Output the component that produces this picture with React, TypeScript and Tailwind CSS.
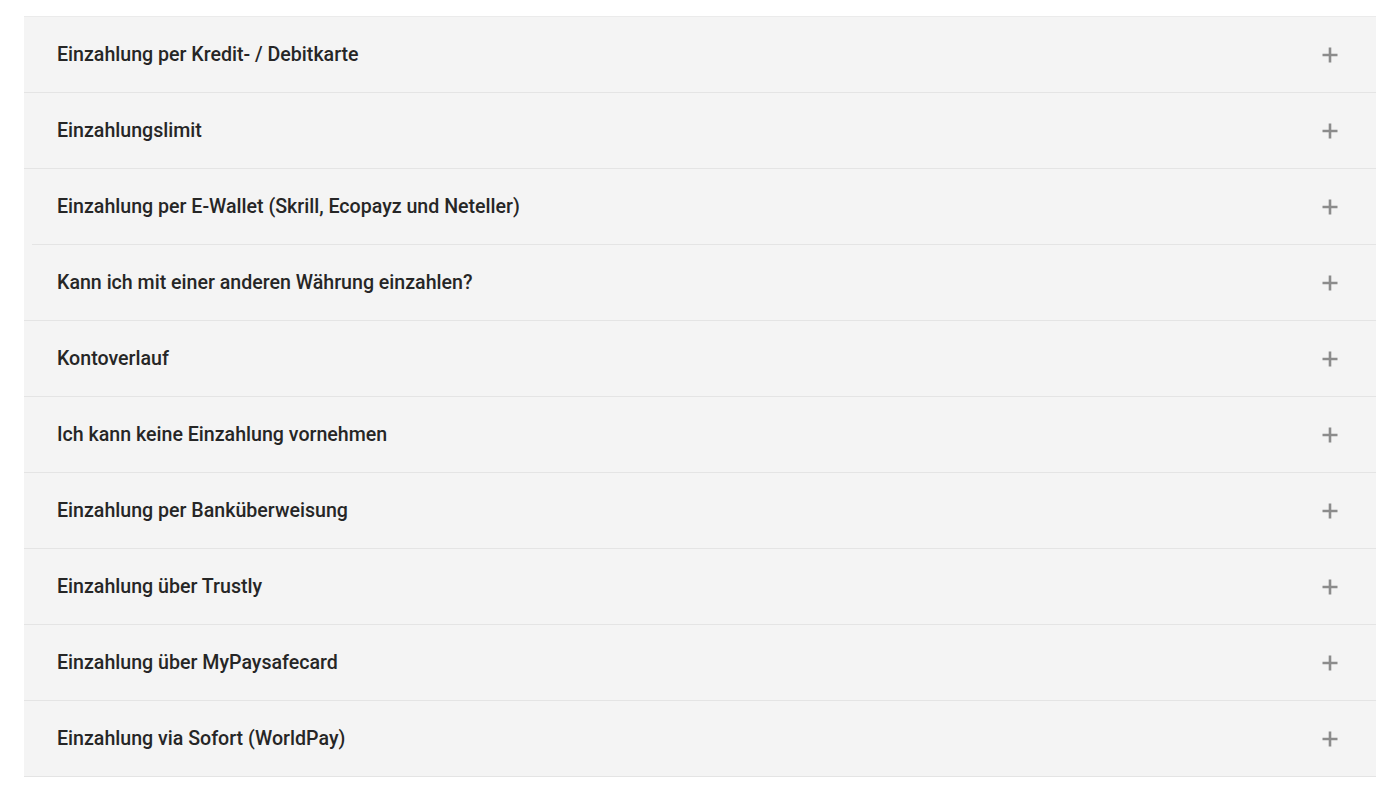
import React from "react";

const items = [
  "Einzahlung per Kredit- / Debitkarte",
  "Einzahlungslimit",
  "Einzahlung per E-Wallet (Skrill, Ecopayz und Neteller)",
  "Kann ich mit einer anderen Währung einzahlen?",
  "Kontoverlauf",
  "Ich kann keine Einzahlung vornehmen",
  "Einzahlung per Banküberweisung",
  "Einzahlung über Trustly",
  "Einzahlung über MyPaysafecard",
  "Einzahlung via Sofort (WorldPay)",
];

function Plus() {
  return (
    <svg width="18" height="18" viewBox="0 0 18 18" className="shrink-0">
      <path d="M9 1.5v15M1.5 9h15" stroke="#8c8c8c" strokeWidth="2.6" />
    </svg>
  );
}

export default function App() {
  return (
    <div
      className="min-h-[798px] w-full bg-white pt-4 px-6"
      style={{ fontFamily: "Roboto, 'Noto Sans', sans-serif" }}
    >
      <div className="border-t border-[#ebebeb]">
        {items.map((t, i) => (
          <div key={i} className="bg-[#f4f4f4]">
            <div className="flex h-[75px] items-center justify-between pl-[33px] pr-[37px]">
              <span className="text-[19.6px] leading-none font-medium text-[#262626]">{t}</span>
              <Plus />
            </div>
            <div className={i === 2 ? "ml-2 h-px bg-[#e4e4e4]" : "h-px bg-[#e4e4e4]"} />
          </div>
        ))}
      </div>
    </div>
  );
}
